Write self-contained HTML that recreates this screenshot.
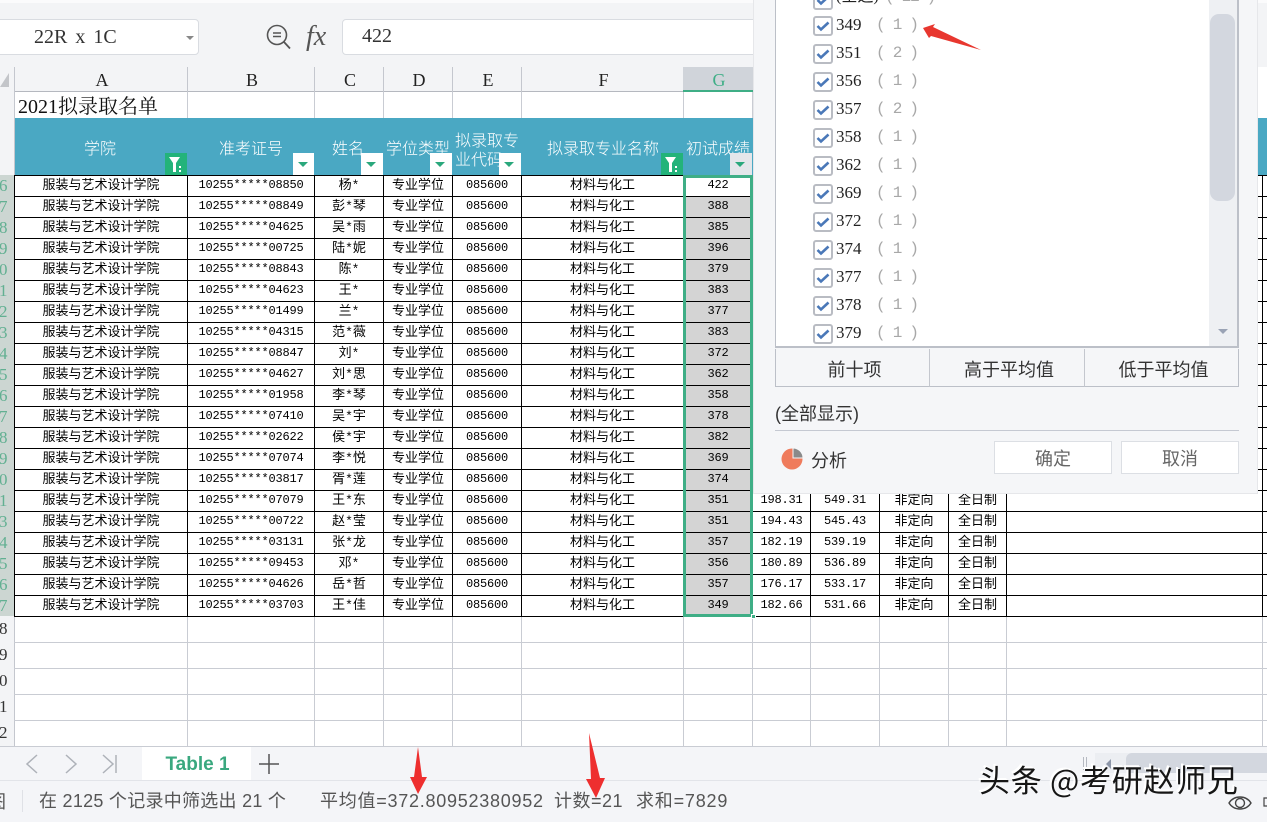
<!DOCTYPE html>
<html><head><meta charset="utf-8">
<style>
html,body{margin:0;padding:0;background:#fff}
body{position:relative;width:1267px;height:822px;overflow:hidden;font-family:"Liberation Sans","Noto Sans CJK SC",sans-serif}
.a{position:absolute}
.hl{position:absolute;left:14px;width:1253px;height:1px;background:#c9ccd3}
.vl{position:absolute;width:1px;background:#c9ccd3}
table{position:absolute;left:14px;top:175px;border-collapse:separate;border-spacing:0;table-layout:fixed;width:1254px;border-top:1px solid #000;border-left:1px solid #000;background:#fff}
td{height:20px;padding:0;border-right:1px solid #000;border-bottom:1px solid #000;text-align:center;font:13px/20px "Liberation Mono","WenQuanYi Zen Hei","Noto Sans CJK SC",monospace;color:#000;white-space:nowrap;overflow:hidden}
td:nth-child(2),td:nth-child(5),td.n,td.s,td.w{font-size:12px;letter-spacing:-.2px;height:19px;line-height:19px;padding-bottom:1px}
td.s{background:#d4d4d4}
td.w{background:#fff}
.ch{position:absolute;top:67px;height:25px;padding-left:2px;background:#f3f4f6;text-align:center;font:18px/27px "Liberation Serif",serif;color:#222;border-bottom:1px solid #b5b8bf;box-sizing:border-box}
.rn{position:absolute;left:0;width:14px;height:21px;background:#ccd6d2;border-right:1px solid #4fb08c;box-sizing:content-box;font:17px/21px "Liberation Serif",serif;color:#62b092;overflow:hidden}
.rg{position:absolute;left:0;width:14px;height:26px;background:#f3f4f6;border-right:1px solid #c4c7ce;font:17px/26px "Liberation Serif",serif;color:#333;overflow:hidden}
.rn span,.rg span{position:absolute;left:-1px}
.ht{position:absolute;color:#fff;font:16px/19px "Noto Sans CJK SC",sans-serif;font-weight:300;white-space:nowrap}
.fb{position:absolute;top:153px;width:22px;height:22px;background:#23b37a}
.db{position:absolute;top:153px;width:21px;height:22px;background:#fff}
.db i{position:absolute;left:5px;top:9px;width:0;height:0;border-left:5px solid transparent;border-right:5px solid transparent;border-top:5px solid #2aa87c}
.cb{position:absolute;left:813px;width:16px;height:16px;border:2px solid #b9bcc3;border-radius:3px;background:#fff}
.lt{position:absolute;left:836px;font:17px/20px "Liberation Serif",serif;color:#222}
.lc{position:absolute;left:876px;width:50px;font:16px/20px "Liberation Mono",monospace;letter-spacing:-1.25px;color:#a8a8a8;white-space:pre}
.bt{position:absolute;top:349px;height:38px;padding-left:4px;font:18px/40px "Noto Sans CJK SC",sans-serif;color:#333;text-align:center;box-sizing:border-box}
.st{position:absolute;top:788px;font:18px/26px "Liberation Sans","Noto Sans CJK SC",sans-serif;color:#555;white-space:nowrap}
</style></head><body>

<!-- formula bar -->
<div class="a" style="left:0;top:0;width:1267px;height:67px;background:#f3f4f6"></div>
<div class="a" style="left:0;top:0;width:1267px;height:3px;background:#fbfbfc"></div>
<div class="a" style="left:-4px;top:19px;width:201px;height:34px;background:#fff;border:1px solid #d9dce1;border-radius:4px"></div>
<div class="a" style="left:34px;top:25px;font:20px/25px 'Liberation Serif',serif;color:#333;white-space:pre;word-spacing:3px">22R x 1C</div>
<div class="a" style="left:186px;top:36px;width:0;height:0;border-left:4px solid transparent;border-right:4px solid transparent;border-top:4px solid #888"></div>
<svg class="a" style="left:264px;top:23px" width="30" height="28" viewBox="0 0 30 28"><circle cx="13" cy="12" r="9.500" fill="none" stroke="#555" stroke-width="1.600"/><path d="M9 10h8M9 13.500h8" stroke="#555" stroke-width="1.400"/><path d="M20 19l6 6.500" stroke="#555" stroke-width="1.800" fill="none"/></svg>
<div class="a" style="left:306px;top:20px;font:italic 28px/34px 'Liberation Serif',serif;color:#555">fx</div>
<div class="a" style="left:342px;top:19px;width:420px;height:34px;background:#fff;border:1px solid #d9dce1;border-radius:4px"></div>
<div class="a" style="left:362px;top:24px;font:20px/25px 'Liberation Serif',serif;color:#333">422</div>

<!-- column headers -->
<div class="a" style="left:0;top:67px;width:14px;height:25px;background:#f3f4f6;border-right:1px solid #c4c7ce"></div>
<svg class="a" style="left:0;top:72px" width="10" height="16"><path d="M9 1V15H0Z" fill="#c3c5c9"/></svg>
<div class="ch" style="left:15px;width:172px">A</div>
<div class="ch" style="left:188px;width:126px">B</div>
<div class="ch" style="left:315px;width:68px">C</div>
<div class="ch" style="left:384px;width:68px">D</div>
<div class="ch" style="left:453px;width:68px">E</div>
<div class="ch" style="left:522px;width:161px">F</div>
<div class="ch" style="left:683px;width:70px;background:#d0d4da;color:#3fae86;border-bottom:2px solid #3fae86">G</div>
<div class="a" style="left:187px;top:67px;width:1px;height:25px;background:#c4c7ce"></div>
<div class="a" style="left:314px;top:67px;width:1px;height:25px;background:#c4c7ce"></div>
<div class="a" style="left:383px;top:67px;width:1px;height:25px;background:#c4c7ce"></div>
<div class="a" style="left:452px;top:67px;width:1px;height:25px;background:#c4c7ce"></div>
<div class="a" style="left:521px;top:67px;width:1px;height:25px;background:#c4c7ce"></div>

<!-- title row -->
<div class="a" style="left:0;top:92px;width:14px;height:26px;background:#f3f4f6;border-right:1px solid #c4c7ce"></div>
<div class="vl" style="left:187px;top:92px;height:26px"></div>
<div class="vl" style="left:314px;top:92px;height:26px"></div>
<div class="vl" style="left:383px;top:92px;height:26px"></div>
<div class="vl" style="left:452px;top:92px;height:26px"></div>
<div class="vl" style="left:521px;top:92px;height:26px"></div>
<div class="vl" style="left:683px;top:92px;height:26px"></div>
<div class="vl" style="left:752px;top:92px;height:26px"></div>
<div class="a" style="left:18px;top:94px;font:20px/26px 'Liberation Serif','Noto Serif CJK SC',serif;color:#111;white-space:nowrap">2021拟录取名单</div>

<!-- header band -->
<div class="a" style="left:0;top:118px;width:14px;height:57px;background:#f3f4f6;border-right:1px solid #c4c7ce"></div>
<div class="a" style="left:15px;top:118px;width:1252px;height:57px;background:#4aa8c3"></div>
<div class="ht" style="left:84px;top:138px">学院</div>
<div class="ht" style="left:219px;top:138px">准考证号</div>
<div class="ht" style="left:332px;top:138px">姓名</div>
<div class="ht" style="left:386px;top:138px">学位类型</div>
<div class="ht" style="left:455px;top:130px">拟录取专<br>业代码</div>
<div class="ht" style="left:547px;top:138px">拟录取专业名称</div>
<div class="ht" style="left:686px;top:138px">初试成绩</div>
<div class="fb" style="left:165px"><svg width="22" height="22"><path d="M4 4H15L11 10V19H8V10Z" fill="#fff"/><path d="M14 13h2v2h-2zM14 17h2v2h-2z" fill="#fff"/></svg></div>
<div class="db" style="left:293px"><i></i></div>
<div class="db" style="left:361px;width:22px"><i></i></div>
<div class="db" style="left:430px;width:22px"><i></i></div>
<div class="db" style="left:499px;width:22px"><i></i></div>
<div class="fb" style="left:661px"><svg width="22" height="22"><path d="M4 4H15L11 10V19H8V10Z" fill="#fff"/><path d="M14 13h2v2h-2zM14 17h2v2h-2z" fill="#fff"/></svg></div>
<div class="db" style="left:730px;width:22px;background:#e4e6ea"><i></i></div>

<!-- row numbers -->
<div class="rn" style="top:175px"><span>6</span></div>
<div class="rn" style="top:196px"><span>7</span></div>
<div class="rn" style="top:217px"><span>8</span></div>
<div class="rn" style="top:238px"><span>9</span></div>
<div class="rn" style="top:259px"><span>0</span></div>
<div class="rn" style="top:280px"><span>1</span></div>
<div class="rn" style="top:301px"><span>2</span></div>
<div class="rn" style="top:322px"><span>3</span></div>
<div class="rn" style="top:343px"><span>4</span></div>
<div class="rn" style="top:364px"><span>5</span></div>
<div class="rn" style="top:385px"><span>6</span></div>
<div class="rn" style="top:406px"><span>7</span></div>
<div class="rn" style="top:427px"><span>8</span></div>
<div class="rn" style="top:448px"><span>9</span></div>
<div class="rn" style="top:469px"><span>0</span></div>
<div class="rn" style="top:490px"><span>1</span></div>
<div class="rn" style="top:511px"><span>3</span></div>
<div class="rn" style="top:532px"><span>4</span></div>
<div class="rn" style="top:553px"><span>5</span></div>
<div class="rn" style="top:574px"><span>6</span></div>
<div class="rn" style="top:595px"><span>7</span></div>
<div class="rg" style="top:616px"><span>8</span></div>
<div class="rg" style="top:642px"><span>9</span></div>
<div class="rg" style="top:668px"><span>0</span></div>
<div class="rg" style="top:694px"><span>1</span></div>
<div class="rg" style="top:720px"><span>2</span></div>

<!-- data -->
<table>
<colgroup><col style="width:173px"><col style="width:127px"><col style="width:69px"><col style="width:69px"><col style="width:69px"><col style="width:162px"><col style="width:69px"><col style="width:58px"><col style="width:69px"><col style="width:69px"><col style="width:58px"><col style="width:256px"><col style="width:6px"></colgroup>
<tr><td>服装与艺术设计学院</td><td>10255*****08850</td><td>杨*</td><td>专业学位</td><td>085600</td><td>材料与化工</td><td class="w">422</td><td colspan="5"></td><td></td></tr>
<tr><td>服装与艺术设计学院</td><td>10255*****08849</td><td>彭*琴</td><td>专业学位</td><td>085600</td><td>材料与化工</td><td class="s">388</td><td colspan="5"></td><td></td></tr>
<tr><td>服装与艺术设计学院</td><td>10255*****04625</td><td>吴*雨</td><td>专业学位</td><td>085600</td><td>材料与化工</td><td class="s">385</td><td colspan="5"></td><td></td></tr>
<tr><td>服装与艺术设计学院</td><td>10255*****00725</td><td>陆*妮</td><td>专业学位</td><td>085600</td><td>材料与化工</td><td class="s">396</td><td colspan="5"></td><td></td></tr>
<tr><td>服装与艺术设计学院</td><td>10255*****08843</td><td>陈*</td><td>专业学位</td><td>085600</td><td>材料与化工</td><td class="s">379</td><td colspan="5"></td><td></td></tr>
<tr><td>服装与艺术设计学院</td><td>10255*****04623</td><td>王*</td><td>专业学位</td><td>085600</td><td>材料与化工</td><td class="s">383</td><td colspan="5"></td><td></td></tr>
<tr><td>服装与艺术设计学院</td><td>10255*****01499</td><td>兰*</td><td>专业学位</td><td>085600</td><td>材料与化工</td><td class="s">377</td><td colspan="5"></td><td></td></tr>
<tr><td>服装与艺术设计学院</td><td>10255*****04315</td><td>范*薇</td><td>专业学位</td><td>085600</td><td>材料与化工</td><td class="s">383</td><td colspan="5"></td><td></td></tr>
<tr><td>服装与艺术设计学院</td><td>10255*****08847</td><td>刘*</td><td>专业学位</td><td>085600</td><td>材料与化工</td><td class="s">372</td><td colspan="5"></td><td></td></tr>
<tr><td>服装与艺术设计学院</td><td>10255*****04627</td><td>刘*思</td><td>专业学位</td><td>085600</td><td>材料与化工</td><td class="s">362</td><td colspan="5"></td><td></td></tr>
<tr><td>服装与艺术设计学院</td><td>10255*****01958</td><td>李*琴</td><td>专业学位</td><td>085600</td><td>材料与化工</td><td class="s">358</td><td colspan="5"></td><td></td></tr>
<tr><td>服装与艺术设计学院</td><td>10255*****07410</td><td>吴*宇</td><td>专业学位</td><td>085600</td><td>材料与化工</td><td class="s">378</td><td colspan="5"></td><td></td></tr>
<tr><td>服装与艺术设计学院</td><td>10255*****02622</td><td>侯*宇</td><td>专业学位</td><td>085600</td><td>材料与化工</td><td class="s">382</td><td colspan="5"></td><td></td></tr>
<tr><td>服装与艺术设计学院</td><td>10255*****07074</td><td>李*悦</td><td>专业学位</td><td>085600</td><td>材料与化工</td><td class="s">369</td><td colspan="5"></td><td></td></tr>
<tr><td>服装与艺术设计学院</td><td>10255*****03817</td><td>胥*莲</td><td>专业学位</td><td>085600</td><td>材料与化工</td><td class="s">374</td><td colspan="5"></td><td></td></tr>
<tr><td>服装与艺术设计学院</td><td>10255*****07079</td><td>王*东</td><td>专业学位</td><td>085600</td><td>材料与化工</td><td class="s">351</td><td class="n">198.31</td><td class="n">549.31</td><td>非定向</td><td>全日制</td><td></td><td></td></tr>
<tr><td>服装与艺术设计学院</td><td>10255*****00722</td><td>赵*莹</td><td>专业学位</td><td>085600</td><td>材料与化工</td><td class="s">351</td><td class="n">194.43</td><td class="n">545.43</td><td>非定向</td><td>全日制</td><td></td><td></td></tr>
<tr><td>服装与艺术设计学院</td><td>10255*****03131</td><td>张*龙</td><td>专业学位</td><td>085600</td><td>材料与化工</td><td class="s">357</td><td class="n">182.19</td><td class="n">539.19</td><td>非定向</td><td>全日制</td><td></td><td></td></tr>
<tr><td>服装与艺术设计学院</td><td>10255*****09453</td><td>邓*</td><td>专业学位</td><td>085600</td><td>材料与化工</td><td class="s">356</td><td class="n">180.89</td><td class="n">536.89</td><td>非定向</td><td>全日制</td><td></td><td></td></tr>
<tr><td>服装与艺术设计学院</td><td>10255*****04626</td><td>岳*哲</td><td>专业学位</td><td>085600</td><td>材料与化工</td><td class="s">357</td><td class="n">176.17</td><td class="n">533.17</td><td>非定向</td><td>全日制</td><td></td><td></td></tr>
<tr><td>服装与艺术设计学院</td><td>10255*****03703</td><td>王*佳</td><td>专业学位</td><td>085600</td><td>材料与化工</td><td class="s">349</td><td class="n">182.66</td><td class="n">531.66</td><td>非定向</td><td>全日制</td><td></td><td></td></tr>
</table>

<!-- empty grid -->
<div class="hl" style="top:642px"></div>
<div class="hl" style="top:668px"></div>
<div class="hl" style="top:694px"></div>
<div class="hl" style="top:720px"></div>
<div class="vl" style="left:187px;top:617px;height:129px"></div>
<div class="vl" style="left:314px;top:617px;height:129px"></div>
<div class="vl" style="left:383px;top:617px;height:129px"></div>
<div class="vl" style="left:452px;top:617px;height:129px"></div>
<div class="vl" style="left:521px;top:617px;height:129px"></div>
<div class="vl" style="left:683px;top:617px;height:129px"></div>
<div class="vl" style="left:752px;top:617px;height:129px"></div>
<div class="vl" style="left:810px;top:617px;height:129px"></div>
<div class="vl" style="left:879px;top:617px;height:129px"></div>
<div class="vl" style="left:948px;top:617px;height:129px"></div>
<div class="vl" style="left:1006px;top:617px;height:129px"></div>
<div class="vl" style="left:1262px;top:617px;height:129px"></div>

<!-- selection -->
<div class="a" style="left:683px;top:175px;width:64px;height:436px;border:3px solid #3fae86"></div>
<div class="a" style="left:751px;top:614px;width:5px;height:5px;background:#3fae86;border:1px solid #fff;box-sizing:border-box"></div>

<!-- filter dialog -->
<div class="a" style="left:753px;top:0;width:503px;height:493px;background:#f5f6f8;border-right:1px solid #e6e7ea;border-bottom:1px solid #e6e7ea;border-left:1px solid #e6e7ea"></div>
<div class="a" style="left:775px;top:0;width:461px;height:346px;background:#fff;border-left:1px solid #bcc0c8;border-right:2px solid #bcc0c8;border-bottom:2px solid #bcc0c8"></div>
<div class="a" style="left:1209px;top:0;width:28px;height:346px;background:#eef0f3"></div>
<div class="a" style="left:1210px;top:14px;width:25px;height:187px;background:#d3d7df;border-radius:9px"></div>
<div class="a" style="left:1218px;top:329px;width:0;height:0;border-left:5px solid transparent;border-right:5px solid transparent;border-top:5px solid #9aa3b5"></div>

<div class="cb" style="top:-10px"><svg width="16" height="16"><path d="M2.500 8l3.500 3.500 7.500-7" fill="none" stroke="#4a78b8" stroke-width="2.600"/></svg></div>
<div class="lt" style="top:-13px;font-family:'Liberation Serif','Noto Sans CJK SC',serif;font-size:16px">(全选)</div>
<div class="lc" style="top:-13px;left:885px;width:80px">( 21 )</div>

<div class="cb" style="top:16px"><svg width="16" height="16"><path d="M2.500 8l3.500 3.500 7.500-7" fill="none" stroke="#4a78b8" stroke-width="2.600"/></svg></div><div class="lt" style="top:15px">349</div><div class="lc" style="top:15px">( 1 )</div>
<div class="cb" style="top:44px"><svg width="16" height="16"><path d="M2.500 8l3.500 3.500 7.500-7" fill="none" stroke="#4a78b8" stroke-width="2.600"/></svg></div><div class="lt" style="top:43px">351</div><div class="lc" style="top:43px">( 2 )</div>
<div class="cb" style="top:72px"><svg width="16" height="16"><path d="M2.500 8l3.500 3.500 7.500-7" fill="none" stroke="#4a78b8" stroke-width="2.600"/></svg></div><div class="lt" style="top:71px">356</div><div class="lc" style="top:71px">( 1 )</div>
<div class="cb" style="top:100px"><svg width="16" height="16"><path d="M2.500 8l3.500 3.500 7.500-7" fill="none" stroke="#4a78b8" stroke-width="2.600"/></svg></div><div class="lt" style="top:99px">357</div><div class="lc" style="top:99px">( 2 )</div>
<div class="cb" style="top:128px"><svg width="16" height="16"><path d="M2.500 8l3.500 3.500 7.500-7" fill="none" stroke="#4a78b8" stroke-width="2.600"/></svg></div><div class="lt" style="top:127px">358</div><div class="lc" style="top:127px">( 1 )</div>
<div class="cb" style="top:156px"><svg width="16" height="16"><path d="M2.500 8l3.500 3.500 7.500-7" fill="none" stroke="#4a78b8" stroke-width="2.600"/></svg></div><div class="lt" style="top:155px">362</div><div class="lc" style="top:155px">( 1 )</div>
<div class="cb" style="top:184px"><svg width="16" height="16"><path d="M2.500 8l3.500 3.500 7.500-7" fill="none" stroke="#4a78b8" stroke-width="2.600"/></svg></div><div class="lt" style="top:183px">369</div><div class="lc" style="top:183px">( 1 )</div>
<div class="cb" style="top:212px"><svg width="16" height="16"><path d="M2.500 8l3.500 3.500 7.500-7" fill="none" stroke="#4a78b8" stroke-width="2.600"/></svg></div><div class="lt" style="top:211px">372</div><div class="lc" style="top:211px">( 1 )</div>
<div class="cb" style="top:240px"><svg width="16" height="16"><path d="M2.500 8l3.500 3.500 7.500-7" fill="none" stroke="#4a78b8" stroke-width="2.600"/></svg></div><div class="lt" style="top:239px">374</div><div class="lc" style="top:239px">( 1 )</div>
<div class="cb" style="top:268px"><svg width="16" height="16"><path d="M2.500 8l3.500 3.500 7.500-7" fill="none" stroke="#4a78b8" stroke-width="2.600"/></svg></div><div class="lt" style="top:267px">377</div><div class="lc" style="top:267px">( 1 )</div>
<div class="cb" style="top:296px"><svg width="16" height="16"><path d="M2.500 8l3.500 3.500 7.500-7" fill="none" stroke="#4a78b8" stroke-width="2.600"/></svg></div><div class="lt" style="top:295px">378</div><div class="lc" style="top:295px">( 1 )</div>
<div class="cb" style="top:324px"><svg width="16" height="16"><path d="M2.500 8l3.500 3.500 7.500-7" fill="none" stroke="#4a78b8" stroke-width="2.600"/></svg></div><div class="lt" style="top:323px">379</div><div class="lc" style="top:323px">( 1 )</div>

<div class="bt" style="left:775px;width:155px;border:1px solid #bcc0c8;border-top:0;border-right:1px solid #c4c7ce">前十项</div>
<div class="bt" style="left:930px;width:155px;border-bottom:1px solid #bcc0c8;border-right:1px solid #c4c7ce">高于平均值</div>
<div class="bt" style="left:1085px;width:154px;border-bottom:1px solid #bcc0c8;border-right:1px solid #bcc0c8">低于平均值</div>
<div class="a" style="left:775px;top:401px;font:18px/26px 'Liberation Sans','Noto Sans CJK SC',sans-serif;color:#333;white-space:nowrap">(全部显示)</div>
<div class="a" style="left:775px;top:430px;width:464px;height:1px;background:#c5c9d2"></div>
<svg class="a" style="left:781px;top:447px" width="24" height="24"><circle cx="11" cy="12" r="10.500" fill="#ef7b5c"/><path d="M12 1A10 10 0 0 1 22 11H12Z" fill="#8a8a8a" stroke="#f5f6f8"/></svg>
<div class="a" style="left:811px;top:447px;font:18px/26px 'Noto Sans CJK SC',sans-serif;color:#333">分析</div>
<div class="a" style="left:994px;top:441px;width:116px;height:31px;background:#fff;border:1px solid #dcdfe4;text-align:center;font:18px/32px 'Noto Sans CJK SC',sans-serif;color:#666">确定</div>
<div class="a" style="left:1121px;top:441px;width:116px;height:31px;background:#fff;border:1px solid #dcdfe4;text-align:center;font:18px/32px 'Noto Sans CJK SC',sans-serif;color:#666">取消</div>

<!-- tab bar -->
<div class="a" style="left:0;top:746px;width:1267px;height:76px;background:#f4f5f8;border-top:1px solid #c9ccd3;box-sizing:border-box"></div>
<div class="a" style="left:0;top:780px;width:1267px;height:1px;background:#e2e4e9"></div>
<div class="a" style="left:142px;top:747px;width:109px;height:33px;background:#fff;text-align:center;font:bold 19px/36px 'Liberation Sans',sans-serif;color:#3aa87f;text-indent:2px">Table 1</div>
<svg class="a" style="left:0;top:748px" width="290" height="32"><path d="M37 7L27 16 37 25M66 7L76 16 66 25M103 7L113 16 103 25" fill="none" stroke="#aeb2b9" stroke-width="1.500"/><path d="M116 7V25" stroke="#aeb2b9" stroke-width="1.500"/><path d="M259 16H279M269 6V26" stroke="#555" stroke-width="1.500"/></svg>
<div class="a" style="left:1083px;top:757px;width:1px;height:13px;background:#b5b9c1"></div>
<div class="a" style="left:1086px;top:757px;width:1px;height:13px;background:#b5b9c1"></div>
<div class="a" style="left:1095px;top:753px;width:172px;height:20px;background:#eceef2"></div>
<div class="a" style="left:1126px;top:753px;width:150px;height:20px;background:#d3d7df;border-radius:6px"></div>
<div class="a" style="left:1106px;top:759px;width:0;height:0;border-top:5px solid transparent;border-bottom:5px solid transparent;border-right:5px solid #8d96a8"></div>

<!-- status bar -->
<div class="a" style="left:-12px;top:788px;font:18px/26px 'Noto Sans CJK SC',sans-serif;color:#555">图</div>
<div class="a" style="left:22px;top:790px;width:1px;height:22px;background:#dfe1e6"></div>
<div class="st" style="left:39px;letter-spacing:.27px">在 2125 个记录中筛选出 21 个</div>
<div class="st" style="left:320px;letter-spacing:.74px">平均值=372.80952380952</div>
<div class="st" style="left:554px;letter-spacing:.5px">计数=21</div>
<div class="st" style="left:636px;letter-spacing:.8px">求和=7829</div>
<svg class="a" style="left:1227px;top:792px" width="40" height="22"><path d="M2 11C7 3 19 3 24 11 19 19 7 19 2 11Z" fill="none" stroke="#444" stroke-width="1.400"/><circle cx="13" cy="11" r="4.500" fill="none" stroke="#444" stroke-width="1.400"/><path d="M37 6h5v8h-5z" fill="none" stroke="#444" stroke-width="1.200"/></svg>

<!-- annotation arrows -->
<svg class="a" style="left:0;top:0" width="1267" height="822">
<path d="M923 28L935 24 933 27 981 50 931 36 929 38Z" fill="#e8372f"/>
<path d="M418 747L422 777H427L418 794 410 777H414Z" fill="#ee2f2f"/>
<path d="M589 733L600 778H605L596 798 586 779 591 779Z" fill="#ee2f2f"/>
</svg>

<!-- watermark -->
<div class="a" style="left:979px;top:757px;font:31px/44px 'Noto Sans CJK SC',sans-serif;letter-spacing:.7px;color:#161616;white-space:nowrap;text-shadow:-2px -2px 0 #fff,-1px -1px 0 #fff">头条 @考研赵师兄</div>

</body></html>
